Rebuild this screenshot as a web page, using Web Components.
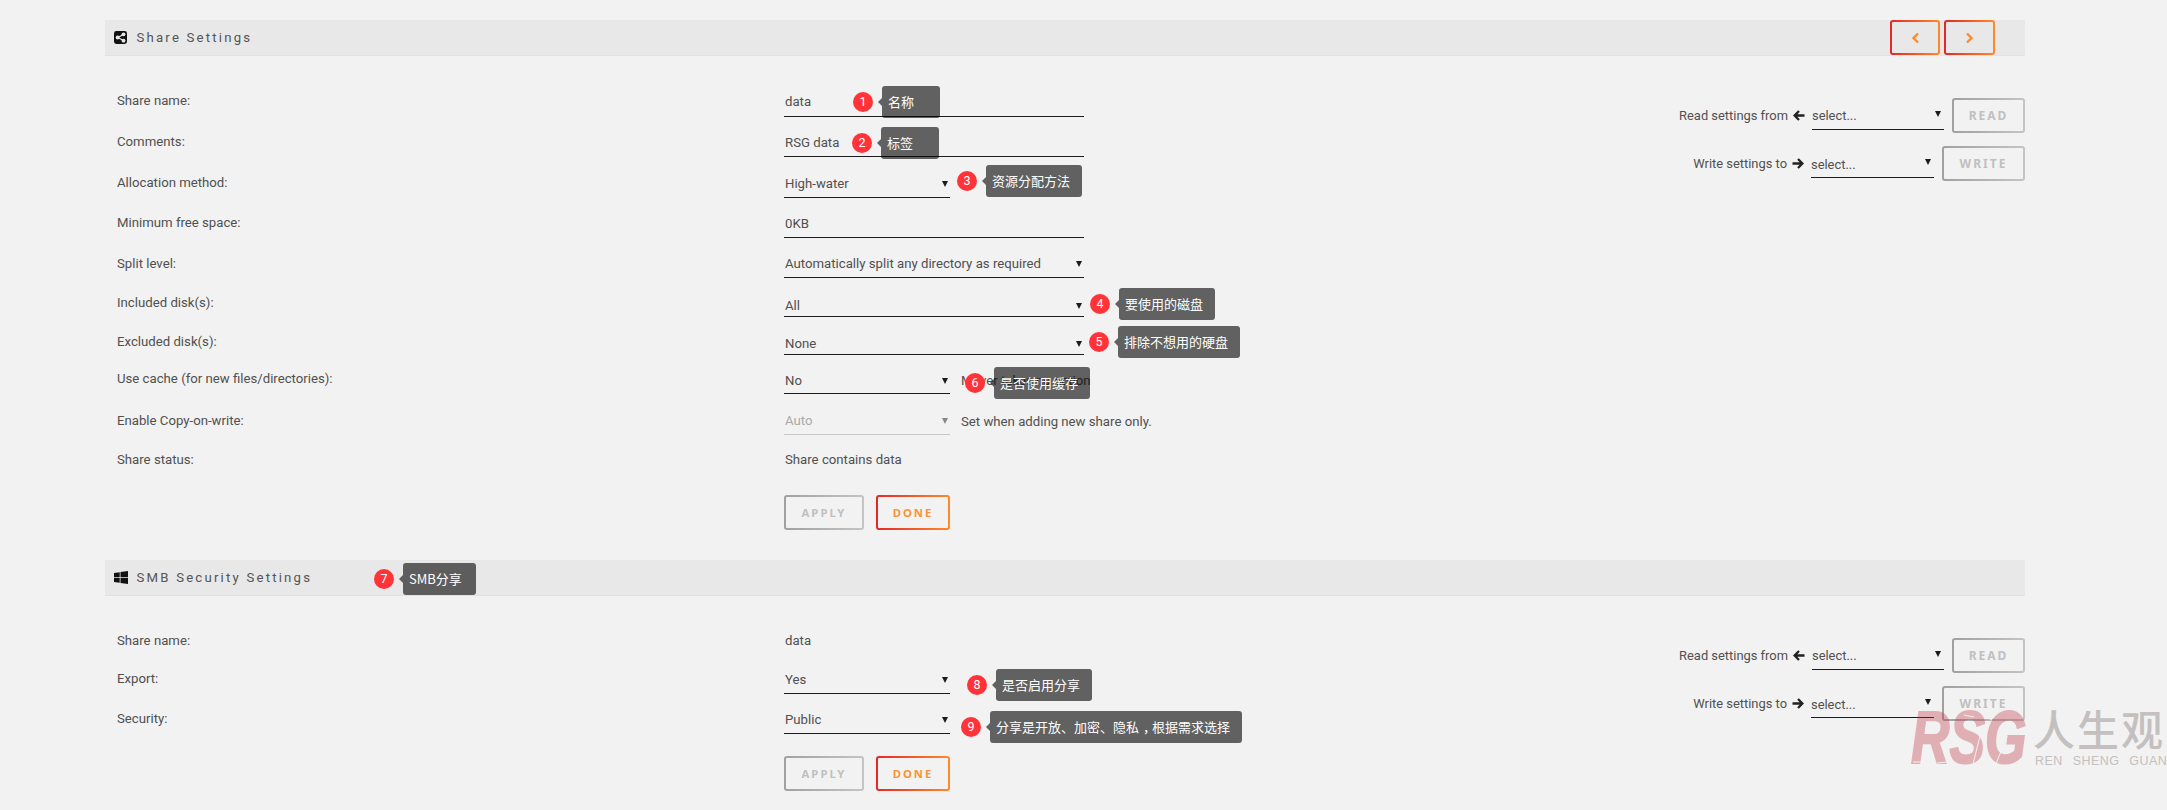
<!DOCTYPE html>
<html lang="en">
<head>
<meta charset="utf-8">
<title>Share Settings</title>
<style>
    html, body { margin: 0; background: #f2f2f2; }
    body {
        width: 1920px;
        height: 810px;
        overflow: hidden;
        padding: 20px 142px 0 105px;
        box-sizing: content-box;
        font: 13.2px/16px Roboto, "Noto Sans CJK SC", sans-serif;
        color: #505050;
    }
    html { overflow: hidden; }
</style>
</head>
<body>

<settings-section title="Share Settings" icon="share" nav style="margin-bottom: 30px">
    <form-row label="Share name:" height="40" lp="8"><form-field value="data" vp="6"></form-field></form-row>
    <form-row label="Comments:" height="40" lp="7"><form-field value="RSG data" vp="5"></form-field></form-row>
    <form-row label="Allocation method:" height="41" lp="7"><form-field value="High-water" select narrow vp="5"></form-field></form-row>
    <form-row label="Minimum free space:" height="40" lp="7"><form-field value="0KB" vp="5"></form-field></form-row>
    <form-row label="Split level:" height="40" lp="6"><form-field value="Automatically split any directory as required" select vp="5"></form-field></form-row>
    <form-row label="Included disk(s):" height="39" lp="6"><form-field value="All" select vp="2"></form-field></form-row>
    <form-row label="Excluded disk(s):" height="38" lp="5"><form-field value="None" select vp="2"></form-field></form-row>
    <form-row label="Use cache (for new files/directories):" height="39" lp="7"><form-field value="No" select narrow vp="4" hint="Mover takes no action"></form-field></form-row>
    <form-row label="Enable Copy-on-write:" height="41" lp="6"><form-field value="Auto" select narrow disabled vp="5" hint="Set when adding new share only."></form-field></form-row>
    <form-row label="Share status:" height="40" lp="7"><form-field value="Share contains data" plain vp="7"></form-field></form-row>
    <form-row height="35" style="margin-top: 20px">
        <div style="display: flex; gap: 12px">
            <form-button label="APPLY" width="80" size="11.3"></form-button>
            <form-button label="DONE" width="74" size="11.3" active></form-button>
        </div>
    </form-row>

    <copy-panel slot="side"></copy-panel>

    <note-tip n="1" width="58" style="left: 748px; top: 66px">名称</note-tip>
    <note-tip n="2" width="58" style="left: 747px; top: 107px">标签</note-tip>
    <note-tip n="3" width="96" style="left: 852px; top: 145px">资源分配方法</note-tip>
    <note-tip n="4" width="96" style="left: 985px; top: 268px">要使用的磁盘</note-tip>
    <note-tip n="5" width="122" style="left: 984px; top: 306px">排除不想用的硬盘</note-tip>
    <note-tip n="6" width="96" style="left: 860px; top: 347px">是否使用缓存</note-tip>
</settings-section>

<settings-section title="SMB Security Settings" icon="windows">
    <form-row label="Share name:" height="39" lp="7"><form-field value="data" plain vp="7"></form-field></form-row>
    <form-row label="Export:" height="38" lp="7"><form-field value="Yes" select narrow vp="5"></form-field></form-row>
    <form-row label="Security:" height="40" lp="7"><form-field value="Public" select narrow vp="5"></form-field></form-row>
    <form-row height="35" style="margin-top: 22px">
        <div style="display: flex; gap: 12px">
            <form-button label="APPLY" width="80" size="11.3"></form-button>
            <form-button label="DONE" width="74" size="11.3" active></form-button>
        </div>
    </form-row>

    <copy-panel slot="side"></copy-panel>

    <note-tip n="7" width="73" style="left: 269px; top: 3px">SMB分享</note-tip>
    <note-tip n="8" width="96" style="left: 862px; top: 109px">是否启用分享</note-tip>
    <note-tip n="9" width="252" style="left: 856px; top: 151px">分享是开放、加密、隐私<span style="position: relative; left: 4px">，</span>根据需求选择</note-tip>
</settings-section>

<rsg-watermark></rsg-watermark>

<script>
const ICONS = {
    share: `<svg width="13" height="13" viewBox="0 0 13 13">
        <rect width="13" height="13" rx="2.4" fill="#111"/>
        <path d="M9.4 3.4 3.8 6.5 9.4 9.6" fill="none" stroke="#e8e8e8" stroke-width="1.2"/>
        <circle cx="3.6" cy="6.5" r="1.9" fill="#e8e8e8"/>
        <circle cx="9.5" cy="3.3" r="1.9" fill="#e8e8e8"/>
        <circle cx="9.5" cy="9.7" r="1.9" fill="#e8e8e8"/>
    </svg>`,
    windows: `<svg width="14" height="13" viewBox="0 0 14 13">
        <path d="M0 2 5.7 1.2V6.2H0ZM6.5 1.1 14 0V6.2H6.5ZM0 6.9H5.7V11.8L0 11ZM6.5 6.9H14V13L6.5 11.9Z" fill="#111"/>
    </svg>`
};

class SettingsSection extends HTMLElement {
    connectedCallback() {
        const shadow = this.attachShadow({mode: 'open'});
        const nav = this.hasAttribute('nav') ? `
            <div class="nav">
                <form-button width="50" height="35" active tint="#e8e8e8"><svg width="9" height="12" viewBox="0 0 9 12"><path d="M7 1.5 2.5 6 7 10.5" fill="none" stroke="#fb8a2e" stroke-width="2.4"/></svg></form-button>
                <form-button width="51" height="35" active tint="#e8e8e8"><svg width="9" height="12" viewBox="0 0 9 12"><path d="M2 1.5 6.5 6 2 10.5" fill="none" stroke="#fb8a2e" stroke-width="2.4"/></svg></form-button>
            </div>` : '';

        shadow.innerHTML = `
            <style>
                :host {
                    display: block;
                    position: relative;
                }

                .bar {
                    display: flex;
                    align-items: center;
                    height: 36px;
                    box-sizing: border-box;
                    padding-left: 9px;
                    background: #e8e8e8;
                    border-bottom: 1px solid #e2e2e2;
                }

                .icon {
                    display: flex;
                    width: 22.5px;
                }

                .title {
                    letter-spacing: 2.2px;
                    color: #555;
                }

                .nav {
                    display: flex;
                    gap: 4px;
                    margin-left: auto;
                    margin-right: 30px;
                    align-self: flex-start;
                }

                .body {
                    display: flex;
                    justify-content: space-between;
                    padding-top: 21px;
                }
            </style>
            <div class="bar">
                <span class="icon">${ICONS[this.getAttribute('icon')]}</span>
                <span class="title">${this.getAttribute('title')}</span>
                ${nav}
            </div>
            <div class="body">
                <div class="rows"><slot></slot></div>
                <slot name="side"></slot>
            </div>
        `;
    }
}

class FormRow extends HTMLElement {
    connectedCallback() {
        const shadow = this.attachShadow({mode: 'open'});
        const lp = this.getAttribute('lp') || 0;

        shadow.innerHTML = `
            <style>
                :host {
                    display: grid;
                    grid-template-columns: 667px auto;
                    height: ${this.getAttribute('height')}px;
                    padding-left: 12px;
                }

                .label {
                    align-self: end;
                    padding-bottom: ${lp}px;
                }
            </style>
            <div class="label">${this.getAttribute('label') || ''}</div>
            <div><slot></slot></div>
        `;
    }
}

// input and select look alike here: text over a rule, with an arrow for the select
class FormField extends HTMLElement {
    connectedCallback() {
        const shadow = this.attachShadow({mode: 'open'});
        const off = this.hasAttribute('disabled');
        const plain = this.hasAttribute('plain');
        const width = this.getAttribute('width') || (this.hasAttribute('narrow') ? 166 : 300);
        const hint = this.getAttribute('hint');

        shadow.innerHTML = `
            <style>
                :host {
                    display: flex;
                    align-items: flex-end;
                    height: 100%;
                }

                .field {
                    display: flex;
                    align-items: center;
                    width: ${width}px;
                    box-sizing: border-box;
                    padding: 0 2px ${this.getAttribute('vp') || 6}px 1px;
                    border-bottom: ${plain ? 0 : `1px solid ${off ? '#c8c8c8' : '#1c1c1c'}`};
                    color: ${off ? '#aaa' : 'inherit'};
                    white-space: nowrap;
                }

                .arrow {
                    margin-left: auto;
                    border: 3px solid transparent;
                    border-top: 6px solid ${off ? '#888' : '#1c1c1c'};
                    border-bottom: 0;
                }

                .hint {
                    margin-left: 11px;
                    padding-bottom: 5px;
                    white-space: nowrap;
                }
            </style>
            <div class="field">
                <span>${this.getAttribute('value')}</span>
                ${this.hasAttribute('select') ? '<span class="arrow"></span>' : ''}
            </div>
            ${hint ? `<span class="hint">${hint}</span>` : ''}
        `;
    }
}

class FormButton extends HTMLElement {
    connectedCallback() {
        const shadow = this.attachShadow({mode: 'open'});
        const on = this.hasAttribute('active');
        const tint = this.getAttribute('tint') || '#f2f2f2';
        const edge = on ? '#e22828, #ff8a2b' : '#a0a0a0, #c4c4c4';

        shadow.innerHTML = `
            <style>
                :host {
                    display: inline-flex;
                    align-items: center;
                    justify-content: center;
                    box-sizing: border-box;
                    width: ${this.getAttribute('width')}px;
                    height: ${this.getAttribute('height') || 35}px;
                    border: 2px solid transparent;
                    border-radius: 3px;
                    background: linear-gradient(${tint}, ${tint}) padding-box,
                                linear-gradient(90deg, ${edge}) border-box;
                    font: bold ${this.getAttribute('size') || 12}px/16px "Noto Sans", sans-serif;
                    letter-spacing: 2px;
                    color: ${on ? '#fb9233' : '#c0c0c0'};
                }
            </style>
            ${this.getAttribute('label') || '<slot></slot>'}
        `;
    }
}

class CopyPanel extends HTMLElement {
    connectedCallback() {
        const shadow = this.attachShadow({mode: 'open'});
        const left = `<svg width="12" height="11" viewBox="0 0 12 11"><path d="M6 1 1.6 5.5 6 10M2 5.5H11.5" fill="none" stroke="#222" stroke-width="2.3"/></svg>`;
        const right = `<svg width="12" height="11" viewBox="0 0 12 11"><path d="M6 1 10.4 5.5 6 10M10 5.5H.5" fill="none" stroke="#222" stroke-width="2.3"/></svg>`;

        shadow.innerHTML = `
            <style>
                :host {
                    display: flex;
                    flex-direction: column;
                    gap: 13px;
                    margin-top: 21px;
                    font-size: 12.9px;
                }

                .line {
                    display: flex;
                    justify-content: flex-end;
                    height: 35px;
                }

                .text {
                    display: flex;
                    align-items: center;
                    gap: 5px;
                    height: 35px;
                }

                .pick {
                    display: flex;
                    align-items: center;
                    box-sizing: border-box;
                    height: 32px;
                    padding: 0 3px 0 0;
                    margin: 0 8px 0 7px;
                    border-bottom: 1px solid #1c1c1c;
                }

                .arrow {
                    margin-left: auto;
                    border: 3px solid transparent;
                    border-top: 6px solid #1c1c1c;
                    border-bottom: 0;
                }

                .value { padding-top: 4px; }
                .down .value { padding-top: 7px; }
            </style>
            <div class="line">
                <span class="text">Read settings from ${left}</span>
                <div class="pick" style="width: 132px"><span class="value">select...</span><span class="arrow"></span></div>
                <form-button label="READ" width="73"></form-button>
            </div>
            <div class="line down">
                <span class="text">Write settings to ${right}</span>
                <div class="pick" style="width: 123px"><span class="value">select...</span><span class="arrow"></span></div>
                <form-button label="WRITE" width="83"></form-button>
            </div>
        `;
    }
}

class NoteTip extends HTMLElement {
    connectedCallback() {
        const shadow = this.attachShadow({mode: 'open'});

        shadow.innerHTML = `
            <style>
                :host {
                    position: absolute;
                    z-index: 2;
                    display: flex;
                    align-items: center;
                    gap: 9px;
                    height: 32px;
                }

                .badge {
                    width: 20px;
                    height: 20px;
                    border-radius: 50%;
                    background: #ff3338;
                    color: #fff;
                    font: 12.5px/20px Roboto, sans-serif;
                    text-align: center;
                }

                .tip {
                    position: relative;
                    width: ${this.getAttribute('width')}px;
                    height: 32px;
                    box-sizing: border-box;
                    padding-left: 6px;
                    border-radius: 3px;
                    background: rgba(0, 0, 0, .6);
                    color: #fff;
                    font: 13px/31px "Noto Sans CJK SC", sans-serif;
                    white-space: nowrap;
                }

                .tip::before {
                    content: '';
                    position: absolute;
                    left: -4px;
                    top: 12px;
                    border: 4px solid transparent;
                    border-right-color: rgba(0, 0, 0, .6);
                    border-left: 0;
                }
            </style>
            <span class="badge">${this.getAttribute('n')}</span>
            <div class="tip"><slot></slot></div>
        `;
    }
}

class RsgWatermark extends HTMLElement {
    constructor() {
        super();
        const shadow = this.attachShadow({mode: 'open'});

        shadow.innerHTML = `
            <style>
                :host {
                    position: absolute;
                    left: 1911px;
                    top: 700px;
                    width: 256px;
                    height: 80px;
                    z-index: 3;
                }

                .rsg {
                    position: absolute;
                    left: 0;
                    top: -1px;
                    font: italic 900 74px/78px "Liberation Sans", sans-serif;
                    color: #bc3544;
                    -webkit-text-stroke: 2px #bc3544;
                    opacity: .35;
                    transform: scaleX(.72);
                    transform-origin: left top;
                }

                .cracks {
                    position: absolute;
                    left: 0;
                    top: 0;
                }

                .cn {
                    position: absolute;
                    left: 122px;
                    top: 7px;
                    font: 500 42px/42px "Noto Sans CJK SC", sans-serif;
                    letter-spacing: 2px;
                    color: #c4c0bf;
                    white-space: nowrap;
                }

                .en {
                    position: absolute;
                    left: 124px;
                    top: 55px;
                    font: 12.5px/12px "Liberation Sans", sans-serif;
                    letter-spacing: .45px;
                    word-spacing: 6px;
                    color: #c4c0bf;
                    white-space: nowrap;
                }
            </style>
            <div class="rsg">RSG</div>
            <svg class="cracks" width="118" height="70" viewBox="0 0 118 70" fill="none" stroke="#f2f2f2" stroke-width="1">
                <path d="M62 64 69 36M85 64 96 36M53 15l10 2M73 16l8 4M2 62h10M26 63l10-1"/>
            </svg>
            <div class="cn">人生观</div>
            <div class="en">REN SHENG GUAN</div>
        `;
    }
}

customElements.define('form-button', FormButton);
customElements.define('form-field', FormField);
customElements.define('form-row', FormRow);
customElements.define('copy-panel', CopyPanel);
customElements.define('note-tip', NoteTip);
customElements.define('settings-section', SettingsSection);
customElements.define('rsg-watermark', RsgWatermark);
</script>
</body>
</html>
